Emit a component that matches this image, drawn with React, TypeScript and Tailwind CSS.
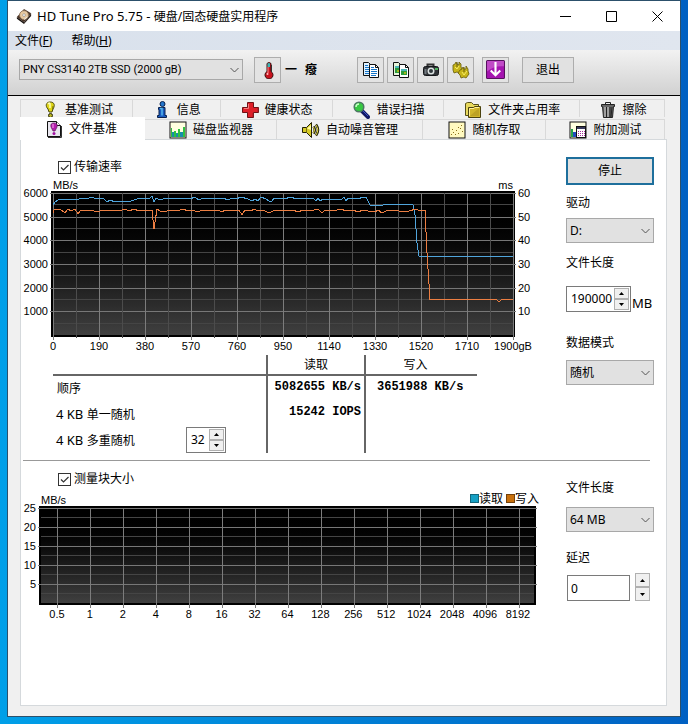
import type { ReactNode } from "react";

const READ_POINTS =
  "0,12 2,9 5,7 12,6 20,6 25,7 27,5 29,6 31,5 34,6 38,4 44,6 50,5 52,7 54,9 57,7 62,9 66,8 72,9 78,8 84,6 92,5 97,5 99,3 101,9 103,5 105,6 108,7 112,5 118,6 127,5 133,5 137,6 142,4 146,7 150,5 160,6 170,5 175,7 179,5 183,6 188,4 195,6 199,8 202,6 205,8 208,4 213,6 216,8 219,8 221,5 232,6 237,4 244,6 260,5 263,8 265,5 267,8 270,6 281,6 284,7 289,6 291,4 293,8 295,5 305,6 310,4 313,4 317,12 330,12 336,11 340,12 350,11 360,12 362,22 364,50 366,63 404,63 406,64 408,63 420,64 424,63 460,63";

const WRITE_POINTS =
  "0,20 1,17 5,16 8,17 12,20 15,16 18,18 22,16 25,21 28,17 34,18 38,17 44,19 50,17 54,18 60,17 66,18 72,16 76,18 81,16 86,18 99,17 101,36 104,16 107,18 114,18 118,17 124,18 130,16 135,18 140,17 144,19 150,17 160,18 165,17 169,19 172,17 180,18 186,17 189,22 192,17 198,18 201,16 205,18 210,17 214,19 218,19 222,17 232,18 240,17 245,19 250,17 257,18 265,16 269,20 272,17 280,18 288,16 293,18 300,17 305,19 310,17 315,18 322,19 325,17 329,20 333,18 342,17 346,18 356,18 363,16 367,18 372,17 374,60 377,107 379,106 390,106 393,107 396,106 402,107 406,106 443,106 446,109 449,106 460,106";

const SIZE_LABELS = ["0.5", "1", "2", "4", "8", "16", "32", "64", "128", "256", "512", "1024", "2048", "4096", "8192"];
const POSITION_LABELS = ["0", "190", "380", "570", "760", "950", "1140", "1330", "1520", "1710", "1900gB"];

/* ---------- icons ---------- */

function Icon({ children, className = "size-[18px]" }: { children: ReactNode; className?: string }) {
  return (
    <svg viewBox="0 0 18 18" className={`${className} shrink-0`} aria-hidden="true">
      {children}
    </svg>
  );
}

const DiskIcon = () => (
  <Icon className="size-4">
    <path d="M1 10 9 1l8 5-8 10z" fill="#4a3325" />
    <path d="M1 10 9 16v2L1 12z" fill="#18120e" />
    <path d="m9 16 8-10v3L9 18z" fill="#2b211a" />
    <ellipse cx="9" cy="8" rx="5" ry="5" fill="#e7c9a0" stroke="#8f765c" />
    <circle cx="9" cy="8" r="1.5" fill="#fff" stroke="#777" strokeWidth=".6" />
    <path d="m9 13 4-3" stroke="#eee" />
  </Icon>
);

const ThermometerIcon = () => (
  <Icon>
    <path d="M8 2.500q2-2 4 0v8a4 4 0 1 1-4 0z" fill="#c8121e" stroke="#3a1010" />
    <path d="M8.500 2.500q1.500-1 2.500 0V6h-2.500z" fill="#38b8b8" />
    <path d="M9 6v6" stroke="#ff8d8d" />
    <circle cx="8.500" cy="13" r="1" fill="#ffc2c2" />
    <path d="M12.500 4v7" stroke="#333" />
  </Icon>
);

const CopyIcon = () => (
  <Icon>
    <path d="M1.500 1.500h5l2 2v11h-7z" fill="#dff1ff" stroke="#111" />
    <path d="M7.500 3.500h6l3 3v10h-9z" fill="#fff" stroke="#111" />
    <path d="M13.500 3.500v3h3" fill="none" stroke="#111" />
    <path d="M3 4.500h3M3 6.500h4M3 8.500h4M3 10.500h4M3 12.500h4M9 6.500h3M9 8.500h6M9 10.500h6M9 12.500h6M9 14.500h5" stroke="#1675c8" />
  </Icon>
);

const CopyImageIcon = () => (
  <Icon>
    <path d="M1.500 1.500h5l2 2v11h-7z" fill="#e6f4d9" stroke="#111" />
    <path d="M7.500 3.500h6l3 3v10h-9z" fill="#fff" stroke="#111" />
    <path d="M13.500 3.500v3h3" fill="none" stroke="#111" />
    <path d="M3 5h4v7H3zM9 8h6v6H9z" fill="#2c9b3b" />
    <path d="M3 5h4v2H3zM9 8h6v2H9z" fill="#4db5b7" />
    <path d="M5 9h2v2H5zM12 11h2v2h-2z" fill="#a6b51c" />
  </Icon>
);

const CameraIcon = () => (
  <Icon>
    <path d="M5.500 6V3.500h6V6" fill="none" stroke="#333" strokeWidth="2" />
    <rect x="1.500" y="5.500" width="15" height="9" rx="2" fill="#303337" stroke="#15171a" />
    <circle cx="9" cy="10" r="3.500" fill="#dce2e2" />
    <circle cx="9" cy="10" r="2" fill="#30383b" />
    <path d="M3.500 8v5" stroke="#727a80" strokeWidth="2" />
    <path d="M13 7h3v2h-3z" fill="#50b560" />
  </Icon>
);

const SettingsIcon = () => (
  <Icon>
    <g fill="#c7b519" stroke="#665c0a" strokeWidth=".8">
      <path d="m1 4 2-1 1-2 1 2 2 1V1l2 2v3l1 2-3 4-2-1-3 1-1-3z" />
      <path d="m8 9 2-1 1-2 1 2h2V5l2 3v2l1 3-3 4-2-1-3 1-1-3-2-2z" />
    </g>
    <path d="m3 6 2 2 2-3M10 11l2 3 3-4" fill="none" stroke="#f7ec64" />
    <path d="M5 1v5M12 6v5" stroke="#685d0c" />
  </Icon>
);

const DownloadIcon = () => (
  <Icon className="size-[19px]">
    <rect x=".5" y=".5" width="17" height="17" rx="1" fill="#a514b0" stroke="#56105e" />
    <path d="M1 1h16v5Q8 5 1 11z" fill="#cd63d2" opacity=".7" />
    <path d="M9 2v12M4.500 10 9 14.500 13.500 10" fill="none" stroke="#fff" strokeWidth="2" />
  </Icon>
);

const BulbIcon = () => (
  <Icon>
    <path d="M9 1c5 0 5 4 3 7l-1 3H8L7 8C4 5 5 1 9 1z" fill="#ded51a" stroke="#4b4a0b" />
    <path d="M7 3q2-2 2 0v4" fill="none" stroke="#ffffb7" strokeWidth="1.500" />
    <path d="M11.500 9 12 5" stroke="#777408" />
    <circle cx="9.500" cy="14.500" r="2" fill="#b6b022" stroke="#292a0b" />
  </Icon>
);

const InfoIcon = () => (
  <Icon>
    <circle cx="9.500" cy="3" r="2.500" fill="#2375cb" stroke="#0a214d" />
    <path d="M5.500 6.500H12v8h1.500v2h-9v-2H6v-6h-.5z" fill="#195bc0" stroke="#0a214d" />
    <path d="M7 7.500h2v7" fill="none" stroke="#55b8eb" strokeWidth="1.500" />
  </Icon>
);

const HealthIcon = () => (
  <Icon>
    <path d="M6.500 1.500h6v5h5v5h-5v5h-6v-5h-5v-5h5z" fill="#df2029" stroke="#6f1115" />
    <path d="M7.500 3v4.500H3" fill="none" stroke="#f57c7b" />
    <path d="M12 12v4M17 7v4" stroke="#982026" />
  </Icon>
);

const MagnifierIcon = () => (
  <Icon>
    <path d="m10 10 6 6" stroke="#111864" strokeWidth="4" strokeLinecap="round" />
    <path d="m10 9 6 6" stroke="#3c53c7" />
    <circle cx="7" cy="6" r="4.800" fill="#38c943" stroke="#4d7763" strokeWidth="1.500" />
    <path d="M4 6q0-3 3-3" fill="none" stroke="#c9ffc7" strokeWidth="1.500" />
  </Icon>
);

const FolderIcon = () => (
  <Icon>
    <path d="M1.500 14.500v-12l2-1h4l2 2h5v11z" fill="#e8d95e" stroke="#57501a" />
    <path d="M4.500 6.500h5l1-1h6v11h-12z" fill="#d1b62c" stroke="#4a4210" />
    <path d="M5.500 15V7.500H10l1-1h4" fill="none" stroke="#fff09b" />
    <path d="m6 15 9-8v8z" fill="#aa8d19" opacity=".5" />
  </Icon>
);

const TrashIcon = () => (
  <Icon>
    <path d="M6.500 3V1.500h5V3" fill="none" stroke="#222" />
    <path d="M2.500 3.500h13v2h-1l-1 11h-9l-1-11h-1z" fill="#686868" stroke="#222" />
    <path d="M6 6v10M9 6v10" stroke="#d7d7d7" />
    <path d="M7.500 6v10M11 6v10M13 6l-1 10" stroke="#222" />
  </Icon>
);

const FileBenchIcon = () => (
  <Icon>
    <path d="M2.500 1.500h9l4 4v11h-13z" fill="#e9e7ef" stroke="#111" />
    <path d="M11.500 1.500v4h4" fill="#fff" stroke="#111" />
    <path d="M9 3q4 0 3 4l-2 4H8L6 7Q5 3 9 3z" fill="#b51cae" stroke="#5c1b59" strokeWidth=".7" />
    <path d="M8 4v4" stroke="#f9a9f0" />
    <circle cx="9" cy="13.500" r="1.500" fill="#a011a0" />
    <path d="M3 17.500h13.500V6" fill="none" stroke="#333" />
  </Icon>
);

const MonitorIcon = () => (
  <Icon>
    <rect x="1" y="1" width="16" height="16" fill="#ffffe0" stroke="#111" />
    <path d="M2 7h1v9H2zM5 10h2v6H5zM9 8h2v8H9zM14 6h2v10h-2z" fill="#2ec23f" />
    <path d="M3 11h2v5H3zM7 12h2v4H7zM11 11h3v5h-3z" fill="#178daa" />
  </Icon>
);

const SpeakerIcon = () => (
  <Icon>
    <path d="M.5 6.500h4l5-5v15l-5-5h-4z" fill="#d6cb27" stroke="#222005" />
    <path d="M5 7.500 9 4v5z" fill="#fff9a1" />
    <path d="M4.500 7v4" stroke="#7a7215" />
    <path d="M11.500 5.500q2.500 3.500 0 7M14 3.500q4 5.500 0 11" fill="none" stroke="#222005" strokeWidth="2.500" />
    <path d="M11.500 6q2 3 0 6M14 4q3.500 5 0 10" fill="none" stroke="#e3d94a" />
  </Icon>
);

const RandomIcon = () => (
  <Icon>
    <rect x="1" y="1" width="16" height="16" fill="#fff9bf" stroke="#111" />
    <path
      d="M3 13.500h1M5 11.500h1M7 13.500h1M8 9.500h1M10 12.500h1M12 7.500h1M14 10.500h1M4 8.500h1M13 4.500h1M10 6.500h1"
      stroke="#8a701c"
    />
  </Icon>
);

const ExtraIcon = () => (
  <Icon>
    <rect x="1" y="1" width="16" height="16" fill="#ffffe0" stroke="#111" />
    <path d="M2 8h2v8H2z" fill="#21a54a" />
    <path d="M4 11h3v5H4z" fill="#224bc1" />
    <rect x="7.500" y="5.500" width="9" height="11" fill="#fff" stroke="#111" />
    <path d="M8 7h8" stroke="#37385a" strokeWidth="2" />
    <path d="M9 10.500h7M9 12.500h7M9 14.500h7" stroke="#a32d98" strokeDasharray="1 1" />
  </Icon>
);

/* ---------- controls ---------- */

function ToolButton({ label, children }: { label: string; children: ReactNode }) {
  return (
    <button
      type="button"
      aria-label={label}
      className="flex h-[26px] w-[27px] shrink-0 items-center justify-center border border-[#adadad] bg-[#e3e3e3]"
    >
      {children}
    </button>
  );
}

function Select({ id, label, options, className }: { id: string; label?: string; options: string[]; className: string }) {
  return (
    <span className={`relative block ${className}`}>
      <select
        id={id}
        aria-label={label}
        className="block size-full appearance-none border border-[#a8a8a8] bg-[#e1e1e1] pr-5 pl-[3px] outline-none"
      >
        {options.map((option) => (
          <option key={option}>{option}</option>
        ))}
      </select>
      <svg viewBox="0 0 9 5" className="pointer-events-none absolute top-1/2 right-1 h-[5px] w-[9px] -translate-y-1/2">
        <path d="m.5.500 4 4 4-4" fill="none" stroke="#555" />
      </svg>
    </span>
  );
}

function Arrows({ className }: { className: string }) {
  return (
    <span className={`flex shrink-0 flex-col ${className}`}>
      <button type="button" aria-label="增加" className="flex flex-1 items-center justify-center border border-[#b0b0b0] bg-[#f0f0f0]">
        <svg viewBox="0 0 5 3" className="h-[3px] w-[5px]">
          <path d="M0 3 2.500 0 5 3z" />
        </svg>
      </button>
      <button type="button" aria-label="减少" className="flex flex-1 items-center justify-center border border-[#b0b0b0] bg-[#f0f0f0]">
        <svg viewBox="0 0 5 3" className="h-[3px] w-[5px]">
          <path d="M0 0h5L2.500 3z" />
        </svg>
      </button>
    </span>
  );
}

function Spinner({ id, label, value, className }: { id: string; label?: string; value: string; className: string }) {
  return (
    <span className={`flex h-[26px] border border-[#7a7a7a] bg-white p-px ${className}`}>
      <input id={id} aria-label={label} defaultValue={value} className="w-0 flex-1 pl-[3px] outline-none" />
      <Arrows className="w-[15px]" />
    </span>
  );
}

function CheckBox({ label }: { label: string }) {
  return (
    <label className="ml-[37px] flex h-4 items-center gap-[3px]">
      <span className="relative flex size-[13px]">
        <input type="checkbox" defaultChecked className="peer size-[13px] appearance-none border border-[#333] bg-white" />
        <svg viewBox="0 0 13 13" className="pointer-events-none invisible absolute inset-0 peer-checked:visible">
          <path d="m3 6.500 2.500 2.500L10.500 4" fill="none" stroke="#333" strokeWidth="1.200" />
        </svg>
      </span>
      {label}
    </label>
  );
}

function Tab({ icon, children, active = false, upper = false }: { icon: ReactNode; children: ReactNode; active?: boolean; upper?: boolean }) {
  let look = "mt-0.5 h-5 border-t border-r border-[#d9d9d9] bg-[#f0f0f0] pt-px";
  if (upper) look = "h-[18px] border-t border-r border-[#d9d9d9] bg-[#f0f0f0] pt-0.5";
  if (active) look = "relative -mb-px h-[23px] bg-white pr-1";
  return (
    <button type="button" role="tab" aria-selected={active} className={`flex items-center justify-center gap-[5px] whitespace-nowrap ${look}`}>
      <span className="flex w-5 justify-center">{icon}</span>
      {children}
    </button>
  );
}

/* ---------- charts ---------- */

function AxisLabels({ values, className }: { values: string[]; className: string }) {
  return (
    <div className={`flex shrink-0 flex-col justify-between py-0.5 ${className}`}>
      {values.map((value, i) => (
        <span key={i} className="flex h-0 items-center">
          {value}
        </span>
      ))}
    </div>
  );
}

function TickLabels({ values, className }: { values: string[]; className: string }) {
  return (
    <div className={`flex h-[18px] items-center justify-between ${className}`}>
      {values.map((value) => (
        <span key={value} className="flex w-0 justify-center">
          {value}
        </span>
      ))}
    </div>
  );
}

type PlotProps = { width: number; height: number; columns: number[]; minorColumns?: number[]; rows: number; children?: ReactNode };

function Plot({ width, height, columns, minorColumns = [], rows, children }: PlotProps) {
  const step = height / rows;
  return (
    <svg
      viewBox={`0 0 ${width} ${height}`}
      preserveAspectRatio="none"
      shapeRendering="crispEdges"
      className="block h-full w-full overflow-visible"
    >
      {Array.from({ length: rows }).map((_, i) => (
        <g key={i}>
          <path d={`M0 ${(i + 0.5) * step}H${width}`} stroke="#454545" />
          <path d={`M-3 ${i * step + 0.5}H${width + 3}`} stroke="#777" />
        </g>
      ))}
      {minorColumns.map((x) => (
        <path key={x} d={`M${x + 0.5} 0V${height + 3}`} stroke="#4c4c4c" />
      ))}
      {columns.map((x) => (
        <path key={x} d={`M${x + 0.5} 0V${height + 5}`} stroke="#7c7c7c" />
      ))}
      {children}
    </svg>
  );
}

const TENTHS = Array.from({ length: 11 }, (_, i) => i * 46);
const TENTHS_MINOR = Array.from({ length: 10 }, (_, i) => i * 46 + 23);
const SIZE_COLUMNS = SIZE_LABELS.map((_, i) => 16 + i * 33);

export default function App() {
  return (
    <div className="flex min-h-screen bg-linear-to-r from-[#009fe8] to-[#0060c2] px-[7px] pb-[7px] font-['Noto_Sans','Noto_Sans_CJK_SC',sans-serif] text-[12px] leading-4 text-black">
      <div className="flex min-w-0 flex-1 flex-col border border-[#2c506b] bg-[#f0f0f0]">
        {/* Title bar */}
        <header className="flex h-[30px] shrink-0 items-center bg-white pl-2">
          <DiskIcon />
          <h1 className="ml-[5px] flex-1">
            <span className="text-[13px]">HD Tune Pro 5.75 - </span>硬盘/固态硬盘实用程序
          </h1>
          <button type="button" aria-label="最小化" className="flex h-full w-[46px] items-center justify-center">
            <svg viewBox="0 0 11 11" className="size-[11px]">
              <path d="M0 5.500h11" stroke="#000" />
            </svg>
          </button>
          <button type="button" aria-label="最大化" className="flex h-full w-[46px] items-center justify-center">
            <svg viewBox="0 0 11 11" className="size-[11px]">
              <path d="M.5.500h10v10H.5z" fill="none" stroke="#000" />
            </svg>
          </button>
          <button type="button" aria-label="关闭" className="flex h-full w-[46px] items-center justify-center">
            <svg viewBox="0 0 11 11" className="size-[11px]">
              <path d="m.5.500 10 10m0-10-10 10" stroke="#000" />
            </svg>
          </button>
        </header>

        {/* Menu */}
        <nav className="flex h-[19px] shrink-0 items-center gap-[19px] bg-linear-to-r from-[#d9e1ec] to-[#e0e6ef] pl-[7px]">
          <button type="button">
            文件(<u>F</u>)
          </button>
          <button type="button">
            帮助(<u>H</u>)
          </button>
        </nav>

        {/* Toolbar */}
        <div className="flex h-[46px] shrink-0 items-center border-b border-black bg-linear-to-b from-[#f2f2f2] to-[#d1d1d1] pr-[106px] pb-1.5 pl-[11px]">
          <Select
            id="device"
            label="设备"
            options={["PNY CS3140 2TB SSD (2000 gB)"]}
            className="h-[21px] w-[224px] font-['Roboto',sans-serif] text-[11px]"
          />
          <div className="ml-[11px] flex items-center">
            <ToolButton label="温度">
              <ThermometerIcon />
            </ToolButton>
            <span className="ml-1 flex gap-2 font-bold">
              <span>一</span>
              <span>癈</span>
            </span>
          </div>
          <div className="ml-auto flex gap-[3px]">
            <ToolButton label="复制文本">
              <CopyIcon />
            </ToolButton>
            <ToolButton label="复制图像">
              <CopyImageIcon />
            </ToolButton>
            <ToolButton label="截图">
              <CameraIcon />
            </ToolButton>
            <ToolButton label="选项">
              <SettingsIcon />
            </ToolButton>
          </div>
          <div className="ml-2 flex gap-[13px]">
            <ToolButton label="保存">
              <DownloadIcon />
            </ToolButton>
            <button type="button" className="h-[26px] w-[52px] border border-[#adadad] bg-[#e1e1e1]">
              退出
            </button>
          </div>
        </div>

        <main className="flex flex-1 flex-col pt-[3px] pr-[13px] pb-2.5 pl-3">
          {/* Tabs */}
          <div role="tablist" className="mr-0.5">
            <div className="grid grid-cols-[112fr_88fr_112fr_112fr_136fr_85fr] border-l border-[#d9d9d9]">
              <Tab upper icon={<BulbIcon />}>基准测试</Tab>
              <Tab upper icon={<InfoIcon />}>信息</Tab>
              <Tab upper icon={<HealthIcon />}>健康状态</Tab>
              <Tab upper icon={<MagnifierIcon />}>错误扫描</Tab>
              <Tab upper icon={<FolderIcon />}>文件夹占用率</Tab>
              <Tab upper icon={<TrashIcon />}>擦除</Tab>
            </div>
            <div className="grid grid-cols-[125fr_132fr_146fr_123fr_119fr]">
              <Tab active icon={<FileBenchIcon />}>文件基准</Tab>
              <Tab icon={<MonitorIcon />}>磁盘监视器</Tab>
              <Tab icon={<SpeakerIcon />}>自动噪音管理</Tab>
              <Tab icon={<RandomIcon />}>随机存取</Tab>
              <Tab icon={<ExtraIcon />}>附加测试</Tab>
            </div>
          </div>

          <div className="flex-1 border border-[#d5d9dc] bg-white pr-3">
            {/* Transfer rate */}
            <section className="flex pb-[7px]">
              <div className="min-w-0 flex-1 pt-[19px]">
                <CheckBox label="传输速率" />
                <div className="font-['Liberation_Sans',sans-serif] text-[11px] leading-3">
                  <div className="mr-[53px] ml-8 flex h-4 items-end justify-between">
                    <span>MB/s</span>
                    <span>ms</span>
                  </div>
                  <div className="flex h-[146px]">
                    <AxisLabels values={["6000", "5000", "4000", "3000", "2000", "1000", ""]} className="w-[30px] items-end pr-[3px]" />
                    <div className="min-w-0 flex-1 border-2 border-black bg-linear-to-b from-black to-[#404040]">
                      <Plot width={460} height={142} columns={TENTHS} minorColumns={TENTHS_MINOR} rows={6}>
                        <polyline points={READ_POINTS} fill="none" stroke="#50a5dc" />
                        <polyline points={WRITE_POINTS} fill="none" stroke="#ec7e42" />
                      </Plot>
                    </div>
                    <AxisLabels values={["60", "50", "40", "30", "20", "10", ""]} className="w-[51px] items-start pl-[3px]" />
                  </div>
                  <TickLabels values={POSITION_LABELS} className="mr-[53px] ml-8" />
                </div>

                <div className="mr-[89px] ml-8">
                  <table className="w-full table-fixed border-collapse">
                    <colgroup>
                      <col className="w-[214px]" />
                      <col className="w-[98px]" />
                      <col />
                    </colgroup>
                    <thead>
                      <tr className="h-5 border-b-2 border-[#666]">
                        <td />
                        <th scope="col" className="border-x-2 border-[#666] font-normal">读取</th>
                        <th scope="col" className="pr-3 font-normal">写入</th>
                      </tr>
                    </thead>
                    <tbody className="font-['Liberation_Mono',monospace] font-bold whitespace-nowrap">
                      <tr className="h-[26px]">
                        <th scope="row" className="pl-1 text-left font-['Noto_Sans','Noto_Sans_CJK_SC',sans-serif] font-normal">顺序</th>
                        <td className="border-x-2 border-[#666] pr-[3px] pb-1 text-right">5082655 KB/s</td>
                        <td className="pb-1 pl-[11px]">3651988 KB/s</td>
                      </tr>
                      <tr className="h-[26px]">
                        <th scope="row" className="pl-[3px] text-left font-['Noto_Sans','Noto_Sans_CJK_SC',sans-serif] font-normal">
                          <span className="text-[13px]">4 KB </span>单一随机
                        </th>
                        <td className="border-x-2 border-[#666] pr-[3px] pb-1 text-right">15242 IOPS</td>
                        <td />
                      </tr>
                      <tr className="h-[26px]">
                        <th scope="row" className="pl-[3px] font-['Noto_Sans','Noto_Sans_CJK_SC',sans-serif] font-normal">
                          <div className="flex items-center justify-between pr-10">
                            <label htmlFor="queue">
                              <span className="text-[13px]">4 KB </span>多重随机
                            </label>
                            <Spinner id="queue" value="32" className="w-10" />
                          </div>
                        </th>
                        <td className="border-x-2 border-[#666]" />
                        <td />
                      </tr>
                    </tbody>
                  </table>
                </div>
              </div>

              <div className="flex w-[88px] shrink-0 flex-col pt-[17px]">
                <button type="button" className="h-7 border-2 border-[#1e6f9c] bg-[#e1e1e1]">
                  停止
                </button>
                <label htmlFor="drive" className="mt-2.5">驱动</label>
                <Select id="drive" options={["D:"]} className="mt-[7px] h-[25px]" />
                <label htmlFor="length" className="mt-3">文件长度</label>
                <div className="mt-[15px] flex items-center gap-px">
                  <Spinner id="length" value="190000" className="w-[65px]" />
                  <span className="pt-2 text-[13px]">MB</span>
                </div>
                <label htmlFor="mode" className="mt-[23px]">数据模式</label>
                <Select id="mode" options={["随机"]} className="mt-[9px] h-[25px]" />
              </div>
            </section>

            <hr className="mr-1 ml-0.5 border-[#999]" />

            {/* Block size */}
            <section className="flex">
              <div className="min-w-0 flex-1 pt-2.5">
                <CheckBox label="测量块大小" />
                <div className="font-['Liberation_Sans',sans-serif] text-[11px] leading-3">
                  <div className="mr-[27px] ml-5 flex h-[19px] items-end justify-between">
                    <span>MB/s</span>
                    <span className="flex items-center gap-[3px] font-['Noto_Sans_CJK_SC',sans-serif] text-[12px] leading-4">
                      <span className="flex items-center">
                        <i className="size-[9px] border border-[#12677d] bg-[#16a0c4]" />
                        读取
                      </span>
                      <span className="flex items-center">
                        <i className="size-[9px] border border-[#74420c] bg-[#c8700c]" />
                        写入
                      </span>
                    </span>
                  </div>
                  <div className="flex h-[99px]">
                    <AxisLabels values={["25", "20", "15", "10", "5", ""]} className="w-[18px] items-end pr-[3px]" />
                    <div className="min-w-0 flex-1 border-2 border-black bg-linear-to-b from-black to-[#404040]">
                      <Plot width={493} height={95} columns={SIZE_COLUMNS} rows={5} />
                    </div>
                    <div className="w-[30px] shrink-0" />
                  </div>
                  <TickLabels values={SIZE_LABELS} className="mr-12 ml-9" />
                </div>
              </div>

              <div className="flex w-[88px] shrink-0 flex-col pt-[19px]">
                <label htmlFor="block-length">文件长度</label>
                <Select id="block-length" options={["64 MB"]} className="mt-[11px] h-[25px]" />
                <label htmlFor="delay" className="mt-[18px]">延迟</label>
                <div className="mt-[7px] flex items-end justify-between pr-1 pl-px">
                  <input id="delay" defaultValue="0" className="h-[26px] w-[63px] border border-[#7a7a7a] bg-white pl-[3px] outline-none" />
                  <Arrows className="h-7 w-[15px]" />
                </div>
              </div>
            </section>
          </div>
        </main>
      </div>
    </div>
  );
}
